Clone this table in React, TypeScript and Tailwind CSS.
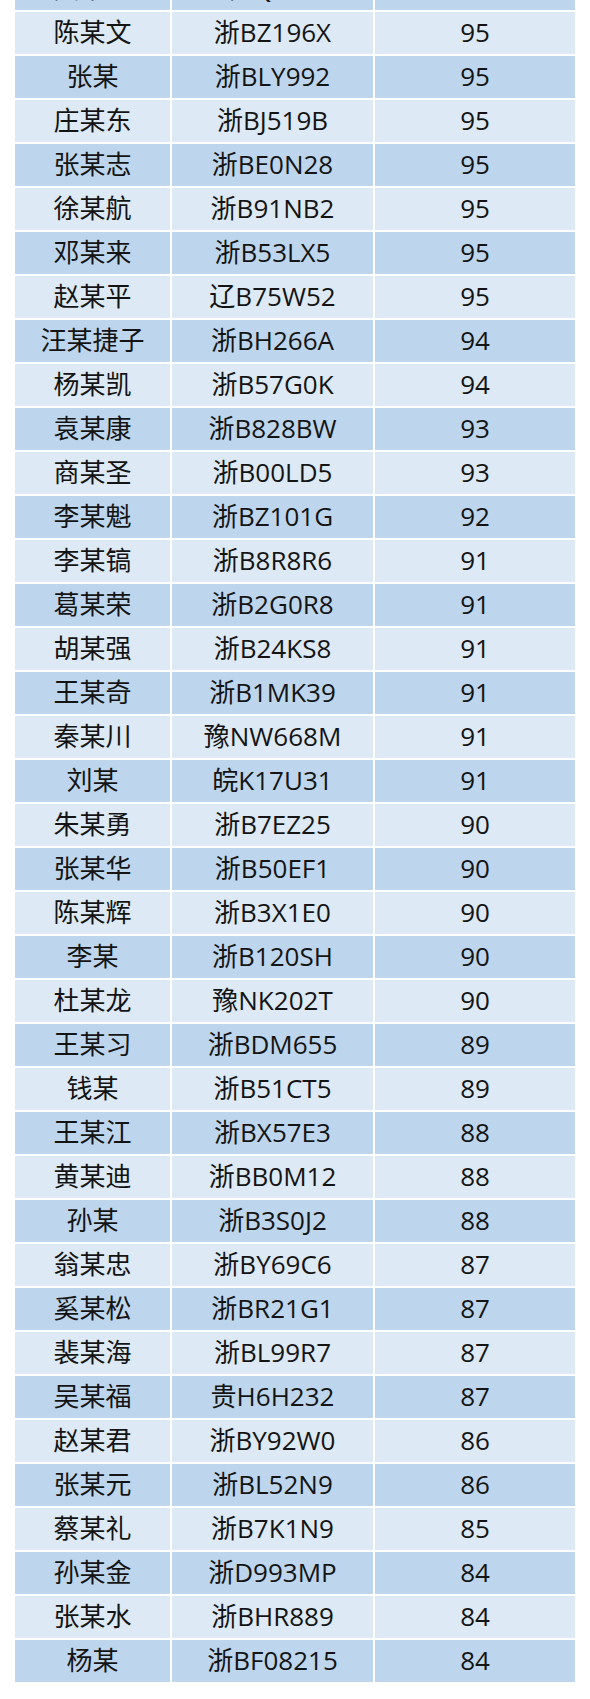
import React from "react";

const rows: [string, string, string][] = [
  ["陈某文", "浙BZ196X", "95"],
  ["张某", "浙BLY992", "95"],
  ["庄某东", "浙BJ519B", "95"],
  ["张某志", "浙BE0N28", "95"],
  ["徐某航", "浙B91NB2", "95"],
  ["邓某来", "浙B53LX5", "95"],
  ["赵某平", "辽B75W52", "95"],
  ["汪某捷子", "浙BH266A", "94"],
  ["杨某凯", "浙B57G0K", "94"],
  ["袁某康", "浙B828BW", "93"],
  ["商某圣", "浙B00LD5", "93"],
  ["李某魁", "浙BZ101G", "92"],
  ["李某镐", "浙B8R8R6", "91"],
  ["葛某荣", "浙B2G0R8", "91"],
  ["胡某强", "浙B24KS8", "91"],
  ["王某奇", "浙B1MK39", "91"],
  ["秦某川", "豫NW668M", "91"],
  ["刘某", "皖K17U31", "91"],
  ["朱某勇", "浙B7EZ25", "90"],
  ["张某华", "浙B50EF1", "90"],
  ["陈某辉", "浙B3X1E0", "90"],
  ["李某", "浙B120SH", "90"],
  ["杜某龙", "豫NK202T", "90"],
  ["王某习", "浙BDM655", "89"],
  ["钱某", "浙B51CT5", "89"],
  ["王某江", "浙BX57E3", "88"],
  ["黄某迪", "浙BB0M12", "88"],
  ["孙某", "浙B3S0J2", "88"],
  ["翁某忠", "浙BY69C6", "87"],
  ["奚某松", "浙BR21G1", "87"],
  ["裴某海", "浙BL99R7", "87"],
  ["吴某福", "贵H6H232", "87"],
  ["赵某君", "浙BY92W0", "86"],
  ["张某元", "浙BL52N9", "86"],
  ["蔡某礼", "浙B7K1N9", "85"],
  ["孙某金", "浙D993MP", "84"],
  ["张某水", "浙BHR889", "84"],
  ["杨某", "浙BF08215", "84"],
];

function Row({ r, light }: { r: [string, string, string]; light: boolean }) {
  const bg = light ? "bg-[#dde9f5]" : "bg-[#bed6ed]";
  return (
    <div className="grid grid-cols-[155px_201px_200px] gap-x-[2px] h-[42px]">
      <div className={`${bg} flex items-center justify-center pb-[3px]`}>{r[0]}</div>
      <div className={`${bg} flex items-center justify-center pb-[3px]`}>{r[1]}</div>
      <div className={`${bg} flex items-center justify-center pb-[3px]`}>{r[2]}</div>
    </div>
  );
}

export default function App() {
  return (
    <div
      className="w-[590px] h-[1699px] bg-white overflow-hidden px-[15px] text-[26px] text-[#141414] leading-none"
      style={{ fontFamily: "'Open Sans', 'Noto Sans CJK SC', sans-serif" }}
    >
      <div className="flex flex-col gap-y-[2px] -mt-[32px]">
        <Row r={["陆某飞", "浙BQ6A05", ""]} light={false} />
        {rows.map((r, i) => (
          <Row key={i} r={r} light={i % 2 === 0} />
        ))}
      </div>
    </div>
  );
}
